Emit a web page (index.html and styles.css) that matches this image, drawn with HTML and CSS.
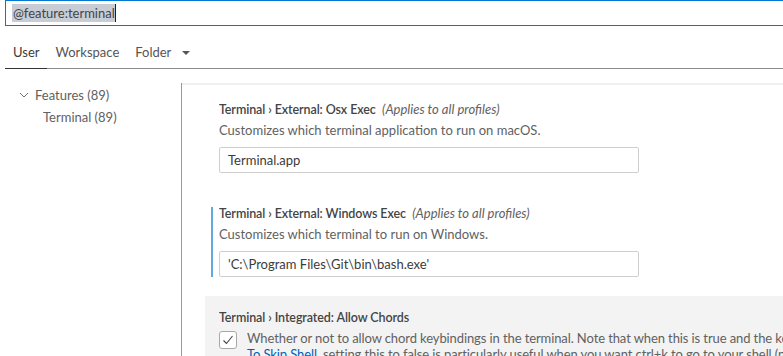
FILE: index.html
```html
<!DOCTYPE html>
<html lang="en">
<head>
    <meta charset="UTF-8">
    <title>Settings</title>
    <link rel="stylesheet" href="styles.css">
</head>
<body>

<div class="search">
    <span class="query">@feature:terminal</span><span class="caret"></span>
</div>

<div class="tabs">
    <div class="tab active">User</div>
    <div class="tab">Workspace</div>
    <div class="tab">Folder <span class="drop"></span></div>
</div>

<div class="body">
    <div class="toc">
        <div class="toc-row">
            <svg class="chevron" width="10" height="6" viewBox="0 0 10 6"><path d="M1 1 L5 5 L9 1" fill="none" stroke="#6f6f6f" stroke-width="1"/></svg>
            Features (89)
        </div>
        <div class="toc-row child">Terminal (89)</div>
    </div>

    <div class="list">
        <div class="item">
            <div class="title"><span class="label">Terminal › External: Osx Exec</span> <em>(Applies to all profiles)</em></div>
            <div class="desc">Customizes which terminal application to run on macOS.</div>
            <div class="input">Terminal.app</div>
        </div>

        <div class="item modified">
            <div class="title"><span class="label">Terminal › External: Windows Exec</span> <em>(Applies to all profiles)</em></div>
            <div class="desc">Customizes which terminal to run on Windows.</div>
            <div class="input">'C:\Program Files\Git\bin\bash.exe'</div>
        </div>

        <div class="item focused">
            <div class="title"><span class="label">Terminal › Integrated: Allow Chords</span></div>
            <div class="check-row">
                <div class="checkbox">
                    <svg width="16" height="16" viewBox="0 0 16 16"><path d="M3.5 8.5 L6.5 11.5 L12.5 4" fill="none" stroke="#424242" stroke-width="1.1"/></svg>
                </div>
                <div class="desc long">
                    Whether or not to allow chord keybindings in the terminal. Note that when this is true and the keystroke results in a chord it will bypass <a>Terminal › Integrated: Commands</a><br>
                    <a>To Skip Shell</a>, setting this to false is particularly useful when you want ctrl+k to go to your shell (not VS Code).
                </div>
            </div>
        </div>
    </div>
</div>

</body>
</html>
```

FILE: styles.css
```css
body {
    margin: 0;
    background: #ffffff;
    font-family: Lato, 'Noto Sans', sans-serif;
    font-size: 13px;
    color: #3b3b3b;
    overflow: hidden;
    height: 356px;
}

.search {
    margin-left: 5px;
    margin-right: -10px;
    height: 24px;
    border: 1px solid #0078d4;
    padding-left: 6px;
    display: flex;
    align-items: center;
    font-size: 13px;
    color: #444;
}

.query {
    background: #c8ccd5;
    line-height: 18px;
    padding-left: 1px;
}

.caret {
    display: inline-block;
    width: 1px;
    height: 18px;
    background: #222;
}

.tabs {
    display: flex;
    margin-top: 14px;
    margin-left: 5px;
    height: 28px;
    border-bottom: 1px solid #8c8c8c;
}

.tab {
    padding: 4px 8px 0;
    margin-right: 0;
    color: #555;
    height: 24px;
    display: flex;
    align-items: flex-start;
}

.tab.active {
    color: #3b3b3b;
    border-bottom: 1px solid #333;
    margin-bottom: -1px;
}

.drop {
    display: inline-block;
    margin-left: 11px;
    margin-top: 7px;
    border-left: 4px solid transparent;
    border-right: 4px solid transparent;
    border-top: 4px solid #555;
}

.body {
    display: flex;
    margin-top: 14px;
}

.toc {
    width: 181px;
    flex: none;
    padding-top: 1px;
}

.toc-row {
    height: 22px;
    display: flex;
    align-items: center;
    padding-left: 19px;
    color: #616161;
    white-space: nowrap;
}

.toc-row.child {
    padding-left: 43px;
}

.chevron {
    margin-right: 6px;
}

.list {
    flex: 1;
    min-width: 0;
    border-left: 1px solid #9a9a9a;
    height: 268px;
    overflow: hidden;
    padding-top: 5px;
    box-shadow: inset 0 2px 0 #efefef;
}

.item {
    margin-left: 23px;
    padding: 12px 0 19px 14px;
    position: relative;
}

.item.modified::before {
    content: '';
    position: absolute;
    left: 6px;
    top: 15px;
    bottom: 19px;
    width: 2px;
    background: #64a8e0;
}

.item.focused {
    background: #f3f3f3;
}

.title {
    height: 18px;
    line-height: 18px;
    color: #444;
    white-space: nowrap;
    overflow: hidden;
}

.title .label {
    font-weight: 600;
    font-size: 12.5px;
    letter-spacing: -0.1px;
}

.title em {
    color: #616161;
    margin-left: 3px;
}

.desc {
    margin-top: 3px;
    line-height: 18px;
    color: #616161;
}

.input {
    margin-top: 8px;
    width: 410px;
    height: 24px;
    border: 1px solid #cecece;
    border-radius: 2px;
    padding-left: 8px;
    line-height: 24px;
    color: #3b3b3b;
}

.check-row {
    display: flex;
    margin-top: 4px;
}

.checkbox {
    width: 16px;
    height: 16px;
    border: 1px solid #a8a8a8;
    border-radius: 3px;
    background: #fff;
    flex: none;
    margin-top: 1px;
    margin-right: 10px;
}

.desc.long {
    margin-top: 0;
    white-space: nowrap;
    line-height: 16px;
    letter-spacing: -0.1px;
}

.desc a {
    color: #005fb8;
    text-decoration: underline;
}
```
